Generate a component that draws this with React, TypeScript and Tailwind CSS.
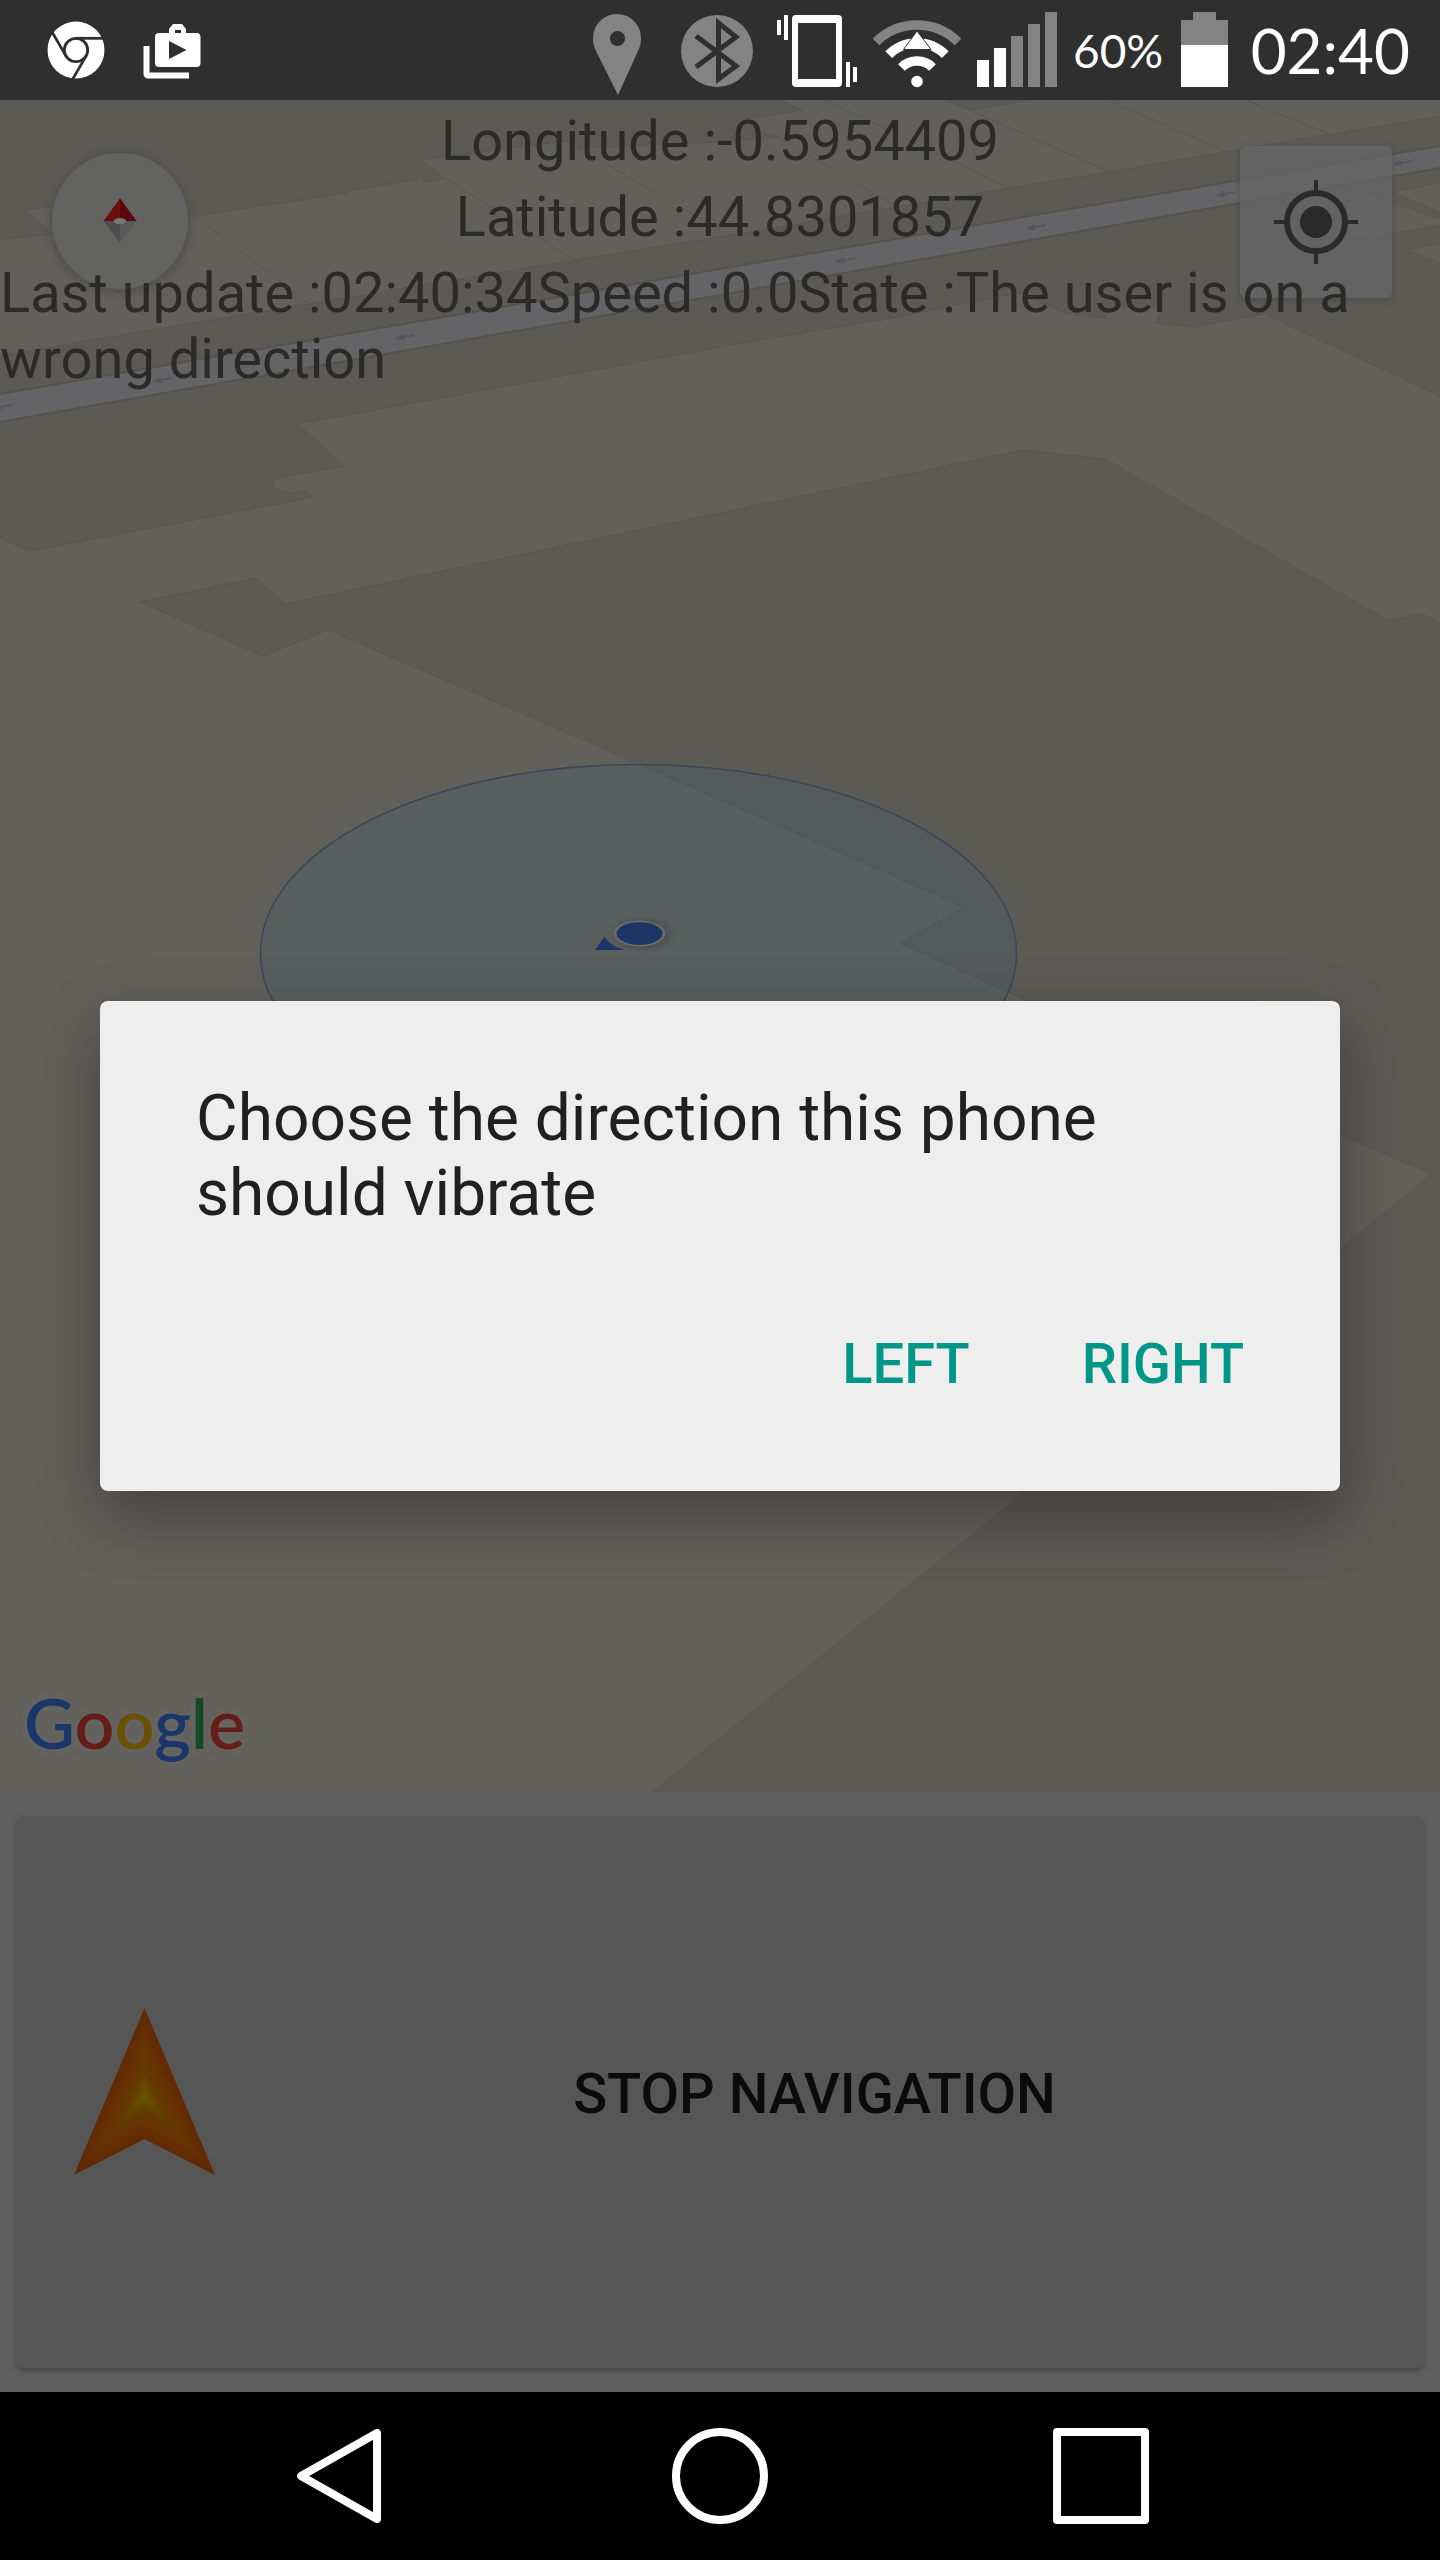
import React from "react";

const GREY = "#838383";

function ChromeIcon() {
  return (
    <svg viewBox="47 0 58 100" className="h-[100px] w-[58px]" role="img" aria-label="Chrome">
      <circle cx="76" cy="50" r="28.5" fill="#fff" />
      <g stroke="#2f2f2f" strokeWidth="2.8" fill="none">
        <circle cx="76" cy="50" r="11.7" />
        <path d="M76 38.3H106" />
        <path d="M76 38.3H106" transform="rotate(120 76 50)" />
        <path d="M76 38.3H106" transform="rotate(240 76 50)" />
      </g>
    </svg>
  );
}

function ShopIcon() {
  return (
    <svg viewBox="143 0 58 100" className="h-[100px] w-[58px]" role="img" aria-label="Play store">
      <path
        fill="#fff"
        fillRule="evenodd"
        d="M159 33h10v-4l4-5h9l4 5v4h10.500a4 4 0 0 1 4 4v26a4 4 0 0 1-4 4H159a4 4 0 0 1-4-4V37a4 4 0 0 1 4-4zM175 30v3h6v-3zM169 41v18l17.500-9z"
      />
      <path fill="#fff" d="M143.500 46h6v26.500H189V78.500h-41a4.500 4.500 0 0 1-4.500-4.500z" />
    </svg>
  );
}

function PinIcon() {
  return (
    <svg viewBox="592 0 48 100" className="mr-10 h-[100px] w-[48px]" role="img" aria-label="Location">
      <path
        fill={GREY}
        fillRule="evenodd"
        d="M616 14a24 24 0 0 1 24 24c0 5-1 9-3 13L617 95 595 51c-2-4-3-8-3-13a24 24 0 0 1 24-24zM616.500 31a7.500 7.500 0 1 0 0.010 0z"
      />
    </svg>
  );
}

function BluetoothIcon() {
  return (
    <svg viewBox="680 0 72 100" className="mr-6 h-[100px] w-[72px]" role="img" aria-label="Bluetooth">
      <circle cx="716" cy="51" r="36" fill={GREY} />
      <path d="M695 36L735 66 717.500 79V23L735 37 695 67" fill="none" stroke="#2f2f2f" strokeWidth="5" />
    </svg>
  );
}

function VibrateIcon() {
  return (
    <svg viewBox="777 0 80 100" className="mr-4 h-[100px] w-[80px]" role="img" aria-label="Vibrate">
      <path
        fill="#fff"
        fillRule="evenodd"
        d="M796 15h42a4 4 0 0 1 4 4v64a4 4 0 0 1-4 4h-42a4 4 0 0 1-4-4V19a4 4 0 0 1 4-4zM798 23v56h38V23z"
      />
      <path fill="#fff" d="M777 20h4v15h-4zM784 15h4v25h-4zM846 62h4v25h-4zM853 67h4v15h-4z" />
    </svg>
  );
}

function WifiIcon() {
  return (
    <svg viewBox="872 0 88 100" className="mr-4 h-[100px] w-[88px]" role="img" aria-label="Wi-Fi">
      <g fill="none" strokeWidth="9.500">
        <path d="M875 42A58 58 0 0 1 957 42" stroke={GREY} />
        <path d="M887.700 54.700A40 40 0 0 1 944.300 54.700" stroke="#fff" />
        <path d="M900.500 67.500A22 22 0 0 1 931.500 67.500" stroke="#fff" />
      </g>
      <circle cx="916" cy="81.500" r="5.800" fill="#fff" />
      <path d="M916 31L902.500 49.500H930z" fill="#fff" stroke="#2f2f2f" strokeWidth="1" />
    </svg>
  );
}

function SignalIcon() {
  return (
    <svg viewBox="976 0 80 100" className="mr-4 h-[100px] w-[80px]" role="img" aria-label="Signal">
      <path fill="#fff" d="M976 60h12v27h-12zM993 48h12v39h-12z" />
      <path fill={GREY} d="M1010 36h12v51h-12zM1027 24h12v63h-12zM1044 12h12v75h-12z" />
    </svg>
  );
}

function BatteryIcon() {
  return (
    <svg viewBox="1180 0 47 100" className="mr-5 h-[100px] w-[47px]" role="img" aria-label="Battery">
      <path fill={GREY} d="M1192 12h23v8h12v25h-47V20h12z" />
      <path fill="#fff" d="M1180 45h47v42h-47z" />
    </svg>
  );
}

const ROAD_ARROWS = [
  [2, 407],
  [162, 380],
  [404, 337],
  [634, 297],
  [845, 260],
  [1036, 227],
  [1225, 194],
  [1402, 163],
];

function MapDrawing() {
  return (
    <svg
      viewBox="0 100 1440 1692"
      preserveAspectRatio="xMidYMin slice"
      className="absolute inset-0 h-full w-full"
      aria-hidden="true"
    >
      <defs>
        <radialGradient id="dotShadow">
          <stop offset="0.600" stopColor="#000" stopOpacity="0.180" />
          <stop offset="1" stopColor="#000" stopOpacity="0" />
        </radialGradient>
      </defs>
      <rect x="0" y="100" width="1440" height="1692" fill="#5c5a55" />
      <g fill="#62605b" stroke="#585650" strokeWidth="1">
        <path d="M-2 240L51 234 26 210 65 205 87 224 195 216 347 193 344 191 420 179 425 182 445 178 420 160 565 141 578 148 720 142 778 137 759 131 743 119 803 110 775 98H942L970 110 1040 98H1442V116L1264 145 1110 172 1009 188 897 207 720 237 574 260 158 329-2 356z" />
        <path d="M1340 203L1442 182V213L1393 193 1380 198 1442 220V225L1355 240z" />
        <path d="M1406 250L1442 243V264z" />
        <path d="M-2 537L30 551 314 497 307 490 294 493 278 491 271 485 275 479 289 476 344 466 298 424 720 347 881 320 1018 293 1041 303 1069 314 1105 318 1110 307 1163 307 1155 323 1194 327 1264 314 1442 397V623L1421 614 1389 621 1105 459 1023 450 720 513 285 604 256 578 140 602 263 656 328 630 584 740 964 907 900 943 1028 1001 1340 1135 1432 1174 1340 1249 1029 1489 650 1794H-2z" />
      </g>
      <g fill="none" stroke="#585650" strokeWidth="1">
        <path d="M195 216L310 305M445 178L574 260M60 242L95 270 158 329M578 148L720 230M821 98L1009 188M778 137L897 207M942 98L1110 172M1103 98L1227 152M1241 98L1331 135" />
      </g>
      <path d="M0 394L720 269 1240 180 1440 146V168L1240 203 720 295 0 422z" fill="#646466" />
      <path
        d="M0 394L720 269 1240 180 1440 146M1440 168L1240 203 720 295 0 422"
        fill="none"
        stroke="#55534e"
        strokeWidth="2"
      />
      {ROAD_ARROWS.map(([x, y]) => (
        <path
          key={x}
          d={`M${x - 10} ${y + 2}l8-5 1 2 11-2v2l-11 2 2 2z`}
          fill="#55555a"
        />
      ))}
      <ellipse cx="638.500" cy="953" rx="378" ry="188.500" fill="#225a70" fillOpacity="0.140" stroke="#37475a" strokeWidth="1.500" />
      <ellipse cx="643" cy="934" rx="34" ry="19" fill="url(#dotShadow)" />
      <ellipse cx="639.500" cy="933.500" rx="26" ry="13" fill="#6a6a6b" />
      <ellipse cx="639.500" cy="933.500" rx="23" ry="11.300" fill="#1b3564" />
      <path d="M604.500 937L595 950H625Q610 946 604.500 937z" fill="#1b3564" />
    </svg>
  );
}

function Compass() {
  return (
    <button
      type="button"
      aria-label="Compass"
      className="absolute top-[51px] left-[50px] h-[140px] w-[140px] rounded-full border-2 border-[#535352] bg-[#646463]/90 shadow-[0_2px_10px_rgba(0,0,0,0.18)]"
    >
      <svg viewBox="0 0 132 132" className="h-full w-full" aria-hidden="true">
        <path d="M66 44L50 66H66z" fill="#6a100e" />
        <path d="M66 44L82 66H66z" fill="#590909" />
        <path d="M66 87L50 66H66z" fill="#4e4e4e" />
        <path d="M66 87L82 66H66z" fill="#595959" />
        <ellipse cx="66" cy="66" rx="6" ry="3" fill="#777" />
      </svg>
    </button>
  );
}

function LocateButton() {
  return (
    <button
      type="button"
      aria-label="My location"
      className="absolute top-[46px] right-12 h-[152px] w-[152px] rounded-md bg-[#656566]/80 shadow-[0_2px_6px_rgba(0,0,0,0.18)]"
    >
      <svg viewBox="0 0 152 152" className="h-full w-full" aria-hidden="true">
        <circle cx="76" cy="76" r="16" fill="#2a2a2a" />
        <circle cx="76" cy="76" r="29" fill="none" stroke="#2a2a2a" strokeWidth="6" />
        <path d="M76 34V46M76 106V118M34 76H46M106 76H118" stroke="#2a2a2a" strokeWidth="4" />
      </svg>
    </button>
  );
}

const GOOGLE = [
  { ch: "G", cls: "text-[#1b3769]" },
  { ch: "o", cls: "text-[#651d19]" },
  { ch: "o", cls: "text-[#685004]" },
  { ch: "g", cls: "text-[#1b3769]" },
  { ch: "l", cls: "text-[#174922]" },
  { ch: "e", cls: "text-[#651d19]" },
];

function GoogleMark() {
  return (
    <a
      href="#google"
      aria-label="Google"
      className="absolute bottom-[30px] left-6 font-['Lato',sans-serif] text-[70px] leading-[80px] font-semibold [text-shadow:0_0_8px_#6a6a69]"
    >
      {GOOGLE.map((g, i) => (
        <span key={i} className={g.cls}>
          {g.ch}
        </span>
      ))}
    </a>
  );
}

const STEPS = Array.from({ length: 28 }, (_, i) => i / 27);

function mix(t: number) {
  const stops = [
    [97, 42, 5],
    [103, 50, 0],
    [98, 60, 0],
    [104, 88, 0],
  ];
  const p = t * 3;
  const i = Math.min(2, Math.floor(p));
  const f = p - i;
  const c = stops[i].map((v, k) => Math.round(v + (stops[i + 1][k] - v) * f));
  return `rgb(${c[0]} ${c[1]} ${c[2]})`;
}

function NavArrow() {
  const pts = [
    [70.5, 0],
    [141, 167],
    [70.5, 131],
    [0, 167],
  ];
  return (
    <svg viewBox="0 0 141 168" className="h-[168px] w-[141px] shrink-0" aria-hidden="true">
      {STEPS.map((t) => (
        <polygon
          key={t}
          fill={mix(t)}
          points={pts.map(([x, y]) => `${70.5 + (x - 70.5) * (1 - t)},${88 + (y - 88) * (1 - t)}`).join(" ")}
        />
      ))}
    </svg>
  );
}

function Dialog() {
  return (
    <div className="absolute inset-0 flex items-center px-[100px]">
      <div
        role="dialog"
        aria-labelledby="dialog-title"
        className="flex-1 rounded-lg bg-[#eeeeee] pt-20 pb-[58px] shadow-[0_24px_64px_rgba(0,0,0,0.32)]"
      >
        <h1 id="dialog-title" className="px-24 text-[64px] leading-[75px] font-normal text-[#202020]">
          Choose the direction this phone should vibrate
        </h1>
        <div className="mt-16 flex justify-end gap-12 px-16 text-[56px] leading-[66px] font-medium text-[#009688]">
          <button type="button" className="px-8 py-9">
            LEFT
          </button>
          <button type="button" className="px-8 py-9">
            RIGHT
          </button>
        </div>
      </div>
    </div>
  );
}

export default function App() {
  return (
    <div className="flex min-h-screen flex-col bg-[#5f5f5f] font-['Roboto',sans-serif]">
      <header className="flex justify-between bg-[#2f2f2f] pr-[30px] pl-[47px] text-white">
        <div className="flex gap-[38px]">
          <ChromeIcon />
          <ShopIcon />
        </div>
        <div className="flex items-center font-['Lato',sans-serif]">
          <PinIcon />
          <BluetoothIcon />
          <VibrateIcon />
          <WifiIcon />
          <SignalIcon />
          <span className="mr-4 w-[92px] text-[46px]">60%</span>
          <BatteryIcon />
          <time className="w-[162px] text-right text-[62px]">02:40</time>
        </div>
      </header>

      <main className="relative flex flex-1 flex-col">
        <section className="relative flex-1 overflow-hidden" aria-label="Map">
          <MapDrawing />
          <Compass />
          <LocateButton />
          <div className="relative flex flex-col gap-[10px] pt-2 text-[56px] leading-[66px] text-[#2a2a28]">
            <p className="text-center">Longitude :-0.5954409</p>
            <p className="text-center">Latitude :44.8301857</p>
            <p>Last update :02:40:34Speed :0.0State :The user is on a wrong direction</p>
          </div>
          <GoogleMark />
        </section>
        <div className="px-4 pt-6 pb-6">
          <button
            type="button"
            className="flex h-[552px] w-full items-center gap-[22px] rounded-lg bg-[#565656] pr-8 pl-[58px] text-[56px] leading-[66px] font-medium text-[#0b0b0b] shadow-[0_3px_5px_rgba(0,0,0,0.25)]"
          >
            <NavArrow />
            <span className="flex-1 pt-1 text-center">STOP NAVIGATION</span>
          </button>
        </div>
        <Dialog />
      </main>

      <nav className="flex h-[168px] items-center justify-center gap-[285px] bg-black">
        <button type="button" aria-label="Back">
          <svg viewBox="0 0 96 96" className="h-24 w-24" aria-hidden="true">
            <path d="M10 48L86 5V91z" fill="none" stroke="#fff" strokeWidth="8" strokeLinejoin="round" />
          </svg>
        </button>
        <button type="button" aria-label="Home">
          <svg viewBox="0 0 96 96" className="h-24 w-24" aria-hidden="true">
            <circle cx="48" cy="48" r="44" fill="none" stroke="#fff" strokeWidth="8" />
          </svg>
        </button>
        <button type="button" aria-label="Recent apps">
          <svg viewBox="0 0 96 96" className="h-24 w-24" aria-hidden="true">
            <rect x="4" y="4" width="88" height="88" fill="none" stroke="#fff" strokeWidth="8" strokeLinejoin="round" />
          </svg>
        </button>
      </nav>
    </div>
  );
}
